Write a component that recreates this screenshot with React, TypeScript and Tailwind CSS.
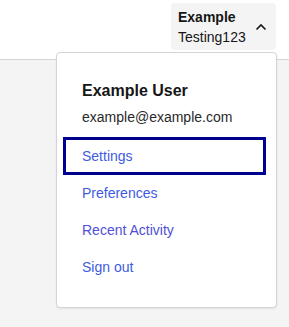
export default function App() {
  const links = [
    { label: 'Settings', focused: true, color: 'text-[#3d5ce0]' },
    { label: 'Preferences', focused: false, color: 'text-[#3d5ce0]' },
    { label: 'Recent Activity', focused: false, color: 'text-[#5050d8]' },
    { label: 'Sign out', focused: false, color: 'text-[#3d5ce0]' },
  ]

  return (
    <div className="relative h-[327px] w-[289px] bg-[#f4f4f4] font-['Liberation_Sans',Arial,sans-serif]">
      {/* header */}
      <div className="flex h-[60px] justify-end border-b border-[#d6d6d6] bg-white pr-[13px] pt-[3px]">
        <button className="flex h-[47px] w-[105px] items-center justify-between rounded-[4px] bg-[#f4f4f4] pl-[7px] pr-[9px] text-left">
          <div className="flex flex-col leading-[20px] text-[#161616]">
            <span className="text-[14px] font-bold">Example</span>
            <span className="text-[14px]">Testing123</span>
          </div>
          <svg width="12" height="8" viewBox="0 0 12 8">
            <path d="M1.5 6.5 L6 2 L10.5 6.5" fill="none" stroke="#161616" strokeWidth="1.6" />
          </svg>
        </button>
      </div>

      {/* dropdown */}
      <div className="absolute left-[56px] top-[52px] w-[221px] rounded-[4px] border border-[#d4d4d4] bg-white pb-[21px] pt-[26px] shadow-[0_1px_2px_rgba(0,0,0,0.08)]">
        <div className="pl-[25px]">
          <div className="text-[16px] font-bold leading-[24px] text-[#161616]">Example User</div>
          <div className="mt-[4px] text-[14px] leading-[20px] text-[#2a2a2a]">example@example.com</div>
        </div>
        <div className="ml-[6px] mr-[10px] mt-[10px] flex flex-col">
          {links.map(l => (
            <div
              key={l.label}
              className={`flex h-[37px] items-center text-[14px] ${l.color} ${
                l.focused ? 'border-[3px] border-[#000090] pl-[16px] h-[38px]' : 'pl-[19px]'
              }`}
            >
              {l.label}
            </div>
          ))}
        </div>
      </div>
    </div>
  )
}
